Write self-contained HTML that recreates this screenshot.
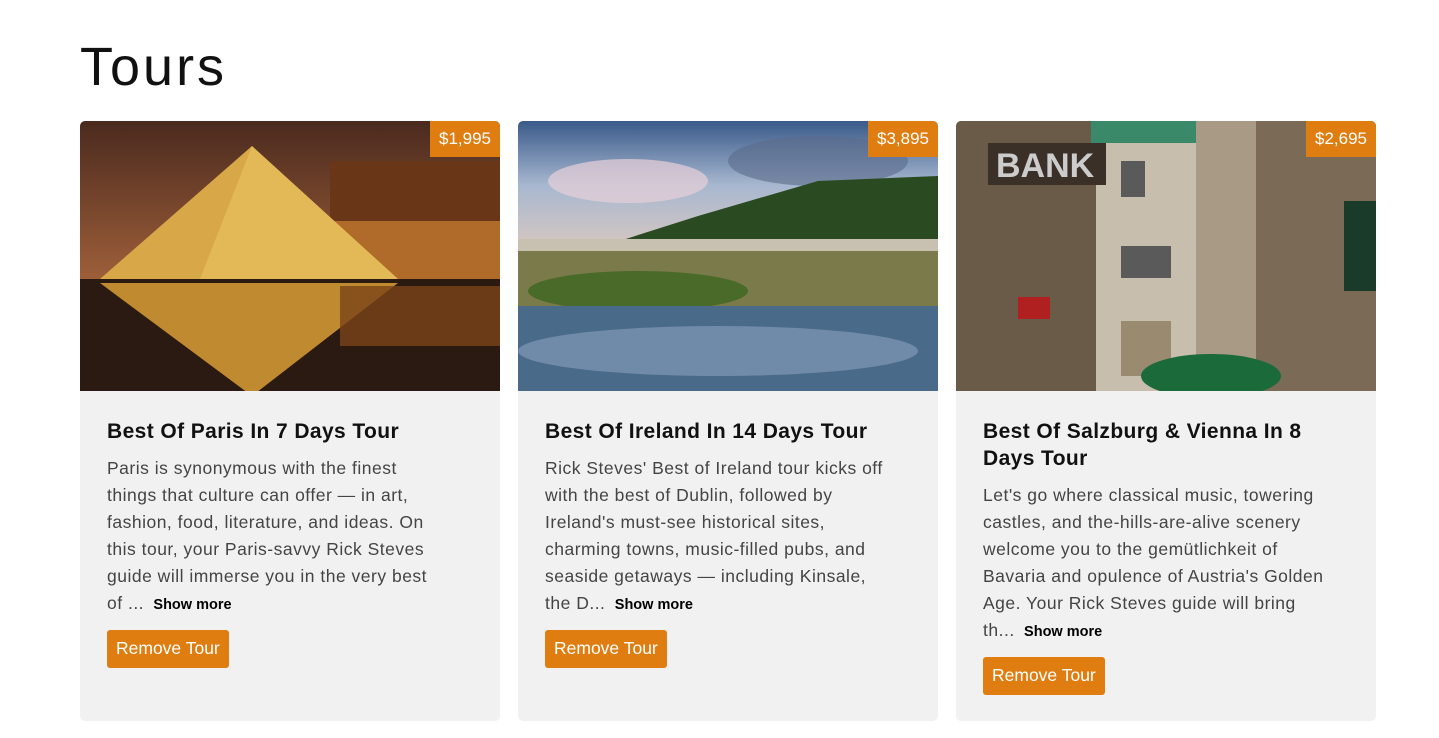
<!DOCTYPE html>
<html><head><meta charset="utf-8"><style>
*{box-sizing:border-box;margin:0;padding:0}
body{width:1439px;height:738px;background:#fff;font-family:"Liberation Sans",Arial,sans-serif;overflow:hidden;position:relative}
h1{position:absolute;left:80px;top:36px;font-size:54px;font-weight:400;letter-spacing:3px;color:#111}
.card{position:absolute;top:121px;width:420px;height:600px;background:#f1f1f1;border-radius:5px;overflow:hidden}
.img{position:relative;height:270px;overflow:hidden}
.img svg{display:block}
.price{position:absolute;right:0;top:0;background:#e07d10;color:#fff;font-size:17px;padding:8px 9px 0;height:36px;border-top-right-radius:5px}
.body{padding:27px 27px 0}
h2{font-size:21px;font-weight:bold;letter-spacing:.4px;color:#111;line-height:27px;margin-bottom:10px;white-space:nowrap}
p{font-size:17.5px;line-height:27px;letter-spacing:.5px;color:#444;white-space:nowrap}
p b{font-size:14.5px;color:#000;letter-spacing:0;margin-left:4px}
.btn{display:inline-block;margin-top:11px;background:#e07d10;color:#fff;font-size:17.5px;padding:8px 9px;border-radius:3px;height:38px}
</style></head><body>
<h1>Tours</h1>

<div class="card" style="left:80px">
<div class="img"><svg width="420" height="270">
<defs><linearGradient id="s1" x1="0" y1="0" x2="0" y2="1"><stop offset="0" stop-color="#4a2a1e"/><stop offset=".6" stop-color="#a0603a"/><stop offset="1" stop-color="#3a2018"/></linearGradient></defs>
<rect width="420" height="270" fill="url(#s1)"/>
<rect x="250" y="40" width="170" height="120" fill="#6a3618"/>
<rect x="250" y="100" width="170" height="60" fill="#b06a2a"/>
<polygon points="172,25 20,158 318,158" fill="#d8a848"/>
<polygon points="172,25 120,158 318,158" fill="#e8c060" opacity=".7"/>
<rect y="158" width="420" height="112" fill="#2a1a12"/>
<polygon points="172,275 20,162 318,162" fill="#c08a30"/>
<rect x="260" y="165" width="160" height="60" fill="#7a4418" opacity=".8"/>
</svg><div class="price">$1,995</div></div>
<div class="body"><h2>Best Of Paris In 7 Days Tour</h2>
<p>Paris is synonymous with the finest<br>things that culture can offer — in art,<br>fashion, food, literature, and ideas. On<br>this tour, your Paris-savvy Rick Steves<br>guide will immerse you in the very best<br>of ... <b>Show more</b></p>
<span class="btn">Remove Tour</span></div></div>

<div class="card" style="left:518px">
<div class="img"><svg width="420" height="270">
<defs><linearGradient id="s2" x1="0" y1="0" x2="0" y2="1"><stop offset="0" stop-color="#3a5a8a"/><stop offset=".5" stop-color="#a8b8d0"/><stop offset="1" stop-color="#d8c8c0"/></linearGradient></defs>
<rect width="420" height="130" fill="url(#s2)"/>
<ellipse cx="110" cy="60" rx="80" ry="22" fill="#e8d0d8" opacity=".7"/>
<ellipse cx="300" cy="40" rx="90" ry="25" fill="#5a6a8a" opacity=".6"/>
<polygon points="70,130 180,95 300,60 420,55 420,130" fill="#2a4a22"/>
<rect y="118" width="420" height="14" fill="#c8c0b0"/>
<rect y="130" width="420" height="60" fill="#7a7a4a"/>
<ellipse cx="120" cy="170" rx="110" ry="20" fill="#4a6a2a"/>
<rect y="185" width="420" height="85" fill="#4a6a8a"/>
<ellipse cx="200" cy="230" rx="200" ry="25" fill="#8aa0c0" opacity=".6"/>
</svg><div class="price">$3,895</div></div>
<div class="body"><h2>Best Of Ireland In 14 Days Tour</h2>
<p>Rick Steves' Best of Ireland tour kicks off<br>with the best of Dublin, followed by<br>Ireland's must-see historical sites,<br>charming towns, music-filled pubs, and<br>seaside getaways — including Kinsale,<br>the D... <b>Show more</b></p>
<span class="btn">Remove Tour</span></div></div>

<div class="card" style="left:956px">
<div class="img"><svg width="420" height="270">
<rect width="420" height="270" fill="#8a7a62"/>
<rect x="0" width="140" height="270" fill="#6a5a48"/>
<rect x="140" width="100" height="270" fill="#c8beae"/>
<rect x="135" width="110" height="22" fill="#3a8a6a"/>
<rect x="165" y="40" width="24" height="36" fill="#5a5a5a"/>
<rect x="165" y="125" width="50" height="32" fill="#5a5a5a"/>
<rect x="165" y="200" width="50" height="55" fill="#9a8a70"/>
<rect x="240" width="60" height="270" fill="#a89a84"/>
<rect x="300" width="120" height="270" fill="#7a6a56"/>
<rect x="32" y="22" width="118" height="42" fill="#3a3028"/>
<text x="40" y="56" font-family="Liberation Sans" font-weight="bold" font-size="34" fill="#ccc">BANK</text>
<rect x="388" y="80" width="32" height="90" fill="#1a3a2a"/>
<rect x="62" y="176" width="32" height="22" fill="#b02020"/>
<ellipse cx="255" cy="255" rx="70" ry="22" fill="#1a6a3a"/>
</svg><div class="price">$2,695</div></div>
<div class="body"><h2>Best Of Salzburg &amp; Vienna In 8<br>Days Tour</h2>
<p>Let's go where classical music, towering<br>castles, and the-hills-are-alive scenery<br>welcome you to the gemütlichkeit of<br>Bavaria and opulence of Austria's Golden<br>Age. Your Rick Steves guide will bring<br>th... <b>Show more</b></p>
<span class="btn">Remove Tour</span></div></div>
</body></html>
